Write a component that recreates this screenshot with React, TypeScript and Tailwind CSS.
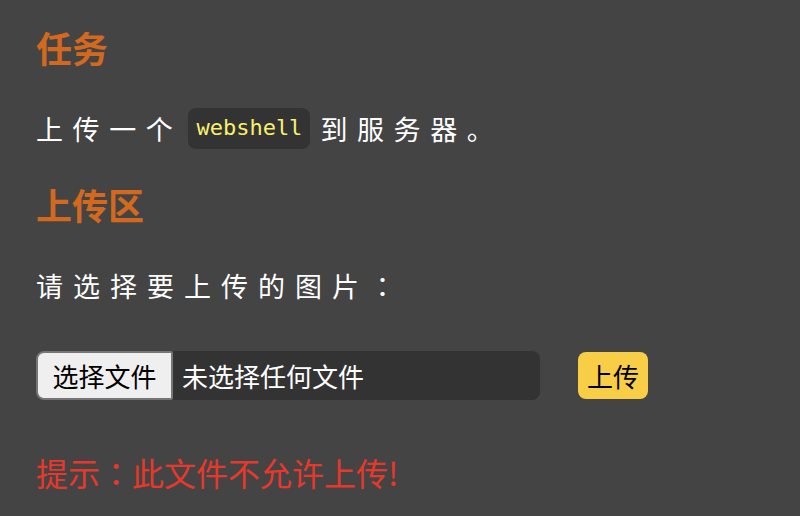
import React from "react";

const CJK = { fontFamily: '"Noto Sans CJK SC", "Noto Sans", sans-serif' };
const JP = { fontFamily: '"Noto Sans CJK JP", sans-serif' };

export default function App() {
  return (
    <div
      className="min-h-[516px] w-full bg-[#444444] px-[36px] pt-[26px] flex flex-col"
      style={CJK}
    >
      <div className="h-[41px] flex items-center text-[36px] font-bold text-[#d2691e] leading-none">
        任务
      </div>
      <div className="mt-[41px] h-[40px] flex items-center text-[27px] font-normal text-white tracking-[9.6px] leading-none">
        <span>上传一个</span>
        <span
          className="ml-[6px] mr-[10px] h-[41px] px-[8px] flex items-center rounded-[8px] bg-[#333333] text-[22px] font-normal text-[#f8f070] tracking-normal"
          style={{ fontFamily: '"DejaVu Sans Mono", monospace' }}
        >
          webshell
        </span>
        <span>到服务器</span>
        <span style={JP}>。</span>
      </div>
      <div className="mt-[36px] h-[40px] flex items-center text-[36px] font-bold text-[#d2691e] leading-none">
        上传区
      </div>
      <div className="mt-[41px] h-[41px] flex items-center text-[27px] font-normal text-white tracking-[10px] leading-none">
        <span>请选择要上传的图片</span>
        <span style={JP}>：</span>
      </div>
      <div className="mt-[45px] flex items-center">
        <div className="w-[504px] h-[49px] flex items-center rounded-[8px] bg-[#333333]">
          <div className="h-[49px] w-[137px] flex items-center justify-center rounded-l-[8px] rounded-r-[2px] border-2 border-[#767676] bg-[#efefef] text-[26px] text-black leading-none">
            选择文件
          </div>
          <span className="ml-[9px] text-[26px] text-white leading-none">未选择任何文件</span>
        </div>
        <div className="ml-[38px] h-[47px] w-[70px] flex items-center justify-center rounded-[8px] bg-[#f8ce46] text-[26px] text-black leading-none">
          上传
        </div>
      </div>
      <div className="mt-[52px] h-[40px] flex items-center text-[32px] text-[#e8372b] leading-none">
        <span>提示</span>
        <span style={JP}>：</span>
        <span>此文件不允许上传!</span>
      </div>
    </div>
  );
}
